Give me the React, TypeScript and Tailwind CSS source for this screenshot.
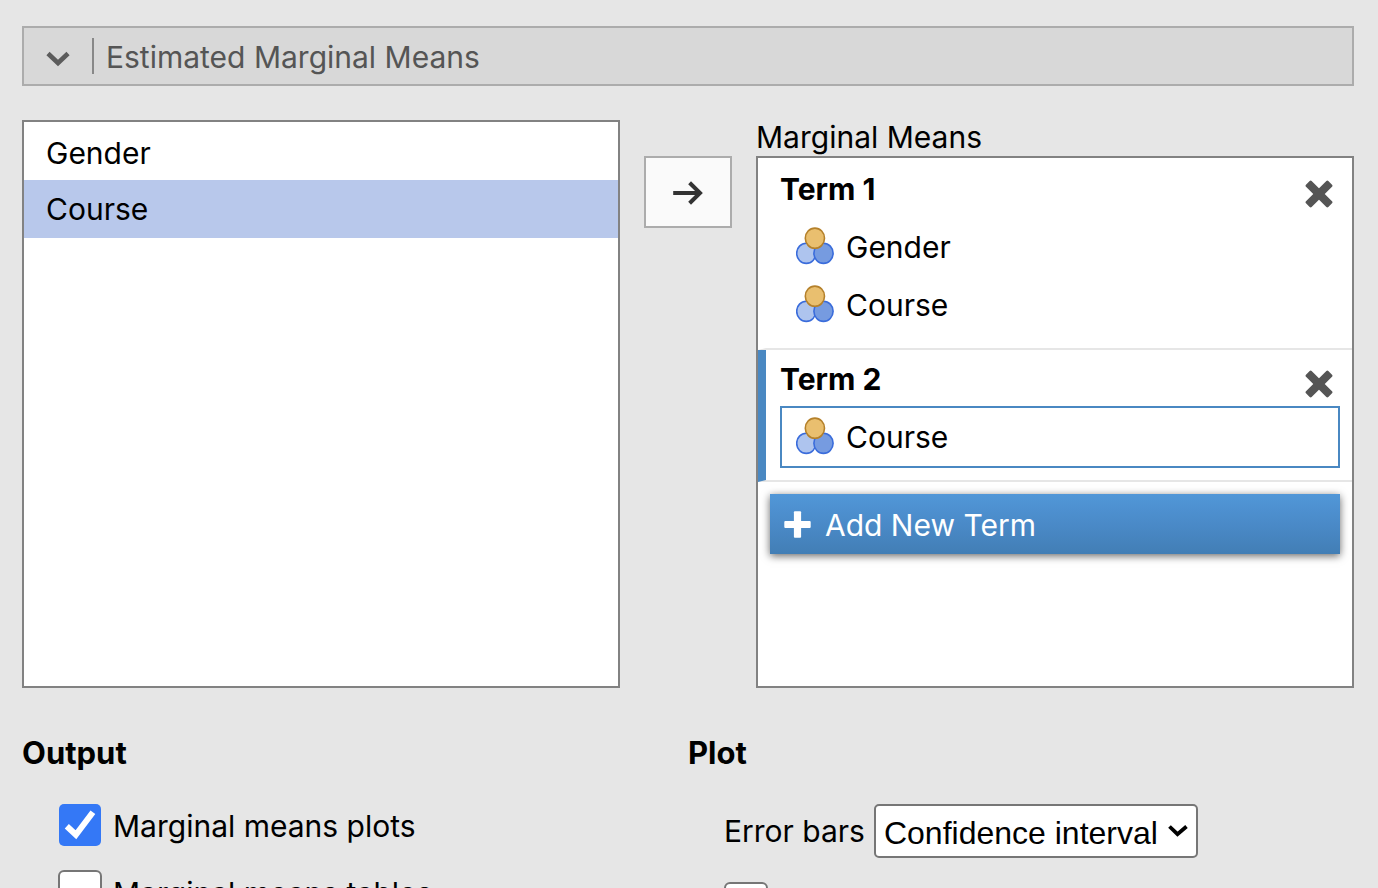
import { useState } from "react";

function NominalIcon() {
  return (
    <svg viewBox="0 0 38 38" className="mb-0.5 size-[38px] shrink-0" aria-hidden="true">
      <ellipse cx="10.3" cy="26.3" rx="9.6" ry="10.1" fill="#aec4ee" stroke="#3a6cdb" strokeWidth="1.6" />
      <ellipse cx="27.5" cy="26.3" rx="9.6" ry="10.1" fill="#769be0" stroke="#3a6cdb" strokeWidth="1.6" />
      <ellipse cx="18.9" cy="11.2" rx="9.6" ry="10.1" fill="#e9bf6f" stroke="#b5812b" strokeWidth="1.6" />
    </svg>
  );
}

function CrossIcon() {
  return (
    <svg viewBox="0 0 28 28" className="size-7" aria-hidden="true">
      <g fill="#555" transform="rotate(45 14 14)">
        <rect x="10" y="-1.8" width="8" height="31.6" rx="1.4" />
        <rect x="-1.8" y="10" width="31.6" height="8" rx="1.4" />
      </g>
    </svg>
  );
}

type TermProps = { name: string; items: string[]; selected?: boolean };

function Term({ name, items, selected = false }: TermProps) {
  return (
    <section
      className={`border-b-2 border-l-8 border-b-[#e6e6e6] pr-3 pb-3 pl-3.5 ${
        selected ? "border-l-[#4a88c2]" : "border-l-white"
      }`}
    >
      <div className="flex h-14 items-center justify-between">
        <h3 className="pt-0.5 font-bold">{name}</h3>
        <button type="button" aria-label={`Remove ${name}`} className="mt-3 mr-[7px]">
          <CrossIcon />
        </button>
      </div>
      <ul className={`border-2 ${selected ? "border-[#4a88c2]" : "border-transparent"}`}>
        {items.map((item) => (
          <li key={item} className="flex h-[58px] items-center gap-3 pl-3.5">
            <NominalIcon />
            {item}
          </li>
        ))}
      </ul>
    </section>
  );
}

type CheckProps = { id: string; label: string; initial?: boolean };

function Check({ id, label, initial = false }: CheckProps) {
  const [on, setOn] = useState(initial);
  return (
    <div className="flex items-center gap-[11px]">
      <span className="grid size-11 shrink-0">
        <input
          id={id}
          type="checkbox"
          checked={on}
          onChange={() => setOn(!on)}
          className="col-start-1 row-start-1 size-11 appearance-none rounded-md border-2 border-[#767676] bg-white checked:border checked:border-transparent checked:bg-[#3478f6] checked:bg-clip-padding"
        />
        {on && (
          <svg viewBox="0 0 44 44" className="pointer-events-none col-start-1 row-start-1 size-11" aria-hidden="true">
            <path d="M8.8 23.2 17.9 31.8 34.9 9.2" fill="none" stroke="#fff" strokeWidth="6" />
          </svg>
        )}
      </span>
      <label htmlFor={id} className="pt-0.5 whitespace-nowrap">
        {label}
      </label>
    </div>
  );
}

export default function App() {
  const [picked, setPicked] = useState("Course");
  return (
    <main className="h-screen overflow-hidden bg-[#e6e6e6] pt-[26px] pr-6 pl-[22px] font-['Inter','Liberation_Sans',sans-serif] text-[30px] leading-9 text-black">
      <button
        type="button"
        className="flex h-[60px] w-full items-center border-2 border-[#acacac] bg-[#d8d8d8] pl-[22px] text-left text-[#555]"
      >
        <svg viewBox="0 0 24 16" className="mt-1.5 h-4 w-6" aria-hidden="true">
          <path d="M2 2.5 12 12 22 2.5" fill="none" stroke="#5c5c5c" strokeWidth="4.6" />
        </svg>
        <span className="ml-[22px] h-9 border-l-2 border-[#888]" />
        <span className="ml-3 pt-0.5">Estimated Marginal Means</span>
      </button>

      <div className="mt-[34px] grid grid-cols-[1fr_auto_1fr] gap-x-6">
        <ul className="border-2 border-[#828282] bg-white pt-0.5">
          {["Gender", "Course"].map((name) => (
            <li key={name} className="-mt-0.5 first:mt-0">
              <button
                type="button"
                onClick={() => setPicked(name)}
                className={`flex h-[58px] w-full items-center pl-[22px] text-left ${
                  picked === name ? "bg-[#b8c8eb]" : ""
                }`}
              >
                {name}
              </button>
            </li>
          ))}
        </ul>

        <button
          type="button"
          aria-label="Add to marginal means"
          className="mt-9 flex h-[72px] w-[88px] items-center justify-center border-2 border-[#acacac] bg-[#fafafa]"
        >
          <svg viewBox="0 0 30 24" className="mt-0.5 h-6 w-[30px]" aria-hidden="true">
            <path d="M0.2 12H27M16.6 1.8 27 12 16.6 22.2" fill="none" stroke="#333" strokeWidth="4" />
          </svg>
        </button>

        <div>
          <h2 className="pb-0.5 leading-[34px]">Marginal Means</h2>
          <div className="min-h-[532px] border-2 border-[#828282] bg-white pt-0.5">
            <Term name="Term 1" items={["Gender", "Course"]} />
            <Term name="Term 2" items={["Course"]} selected />
            <div className="p-3">
              <button
                type="button"
                className="flex h-[60px] w-full items-center gap-3.5 bg-linear-to-b from-[#5197d8] via-[#4a8ac8] to-[#427eb5] pl-3.5 text-white shadow-[0_2px_8px_rgba(0,0,0,0.6)]"
              >
                <svg viewBox="0 0 27 27" className="size-[27px]" fill="#fff" aria-hidden="true">
                  <rect x="9.9" y="0.3" width="7.2" height="26.4" rx="1" />
                  <rect x="0.3" y="9.9" width="26.4" height="7.2" rx="1" />
                </svg>
                <span className="pt-0.5">Add New Term</span>
              </button>
            </div>
          </div>
        </div>
      </div>

      <div className="mt-12 grid grid-cols-2">
        <section>
          <h2 className="pb-0.5 text-[31px] leading-[34px] font-bold">Output</h2>
          <div className="mt-[31px] flex flex-col gap-[23px] pl-9">
            <Check id="plots" label="Marginal means plots" initial />
            <Check id="tables" label="Marginal means tables" />
          </div>
        </section>
        <section>
          <h2 className="pb-0.5 text-[31px] leading-[34px] font-bold">Plot</h2>
          <div className="mt-8 flex flex-col gap-6 pl-9">
            <div className="flex items-center gap-[9px]">
              <label htmlFor="bars">Error bars</label>
              <div className="grid items-center">
                <select
                  id="bars"
                  className="col-start-1 row-start-1 h-[54px] w-[324px] appearance-none rounded-[5px] border-2 border-[#767676] bg-white pt-1 pl-2 font-['Liberation_Sans',Arial,sans-serif] text-[32px]"
                >
                  <option>Confidence interval</option>
                  <option>Standard error</option>
                  <option>None</option>
                </select>
                <svg
                  viewBox="0 0 20 14"
                  className="pointer-events-none col-start-1 row-start-1 mr-2.5 h-3.5 w-5 justify-self-end"
                  aria-hidden="true"
                >
                  <path d="M1.5 2.5 9.5 10.2 18.5 2.5" fill="none" stroke="#000" strokeWidth="3.8" />
                </svg>
              </div>
            </div>
            <Check id="observed" label="" />
          </div>
        </section>
      </div>
    </main>
  );
}
